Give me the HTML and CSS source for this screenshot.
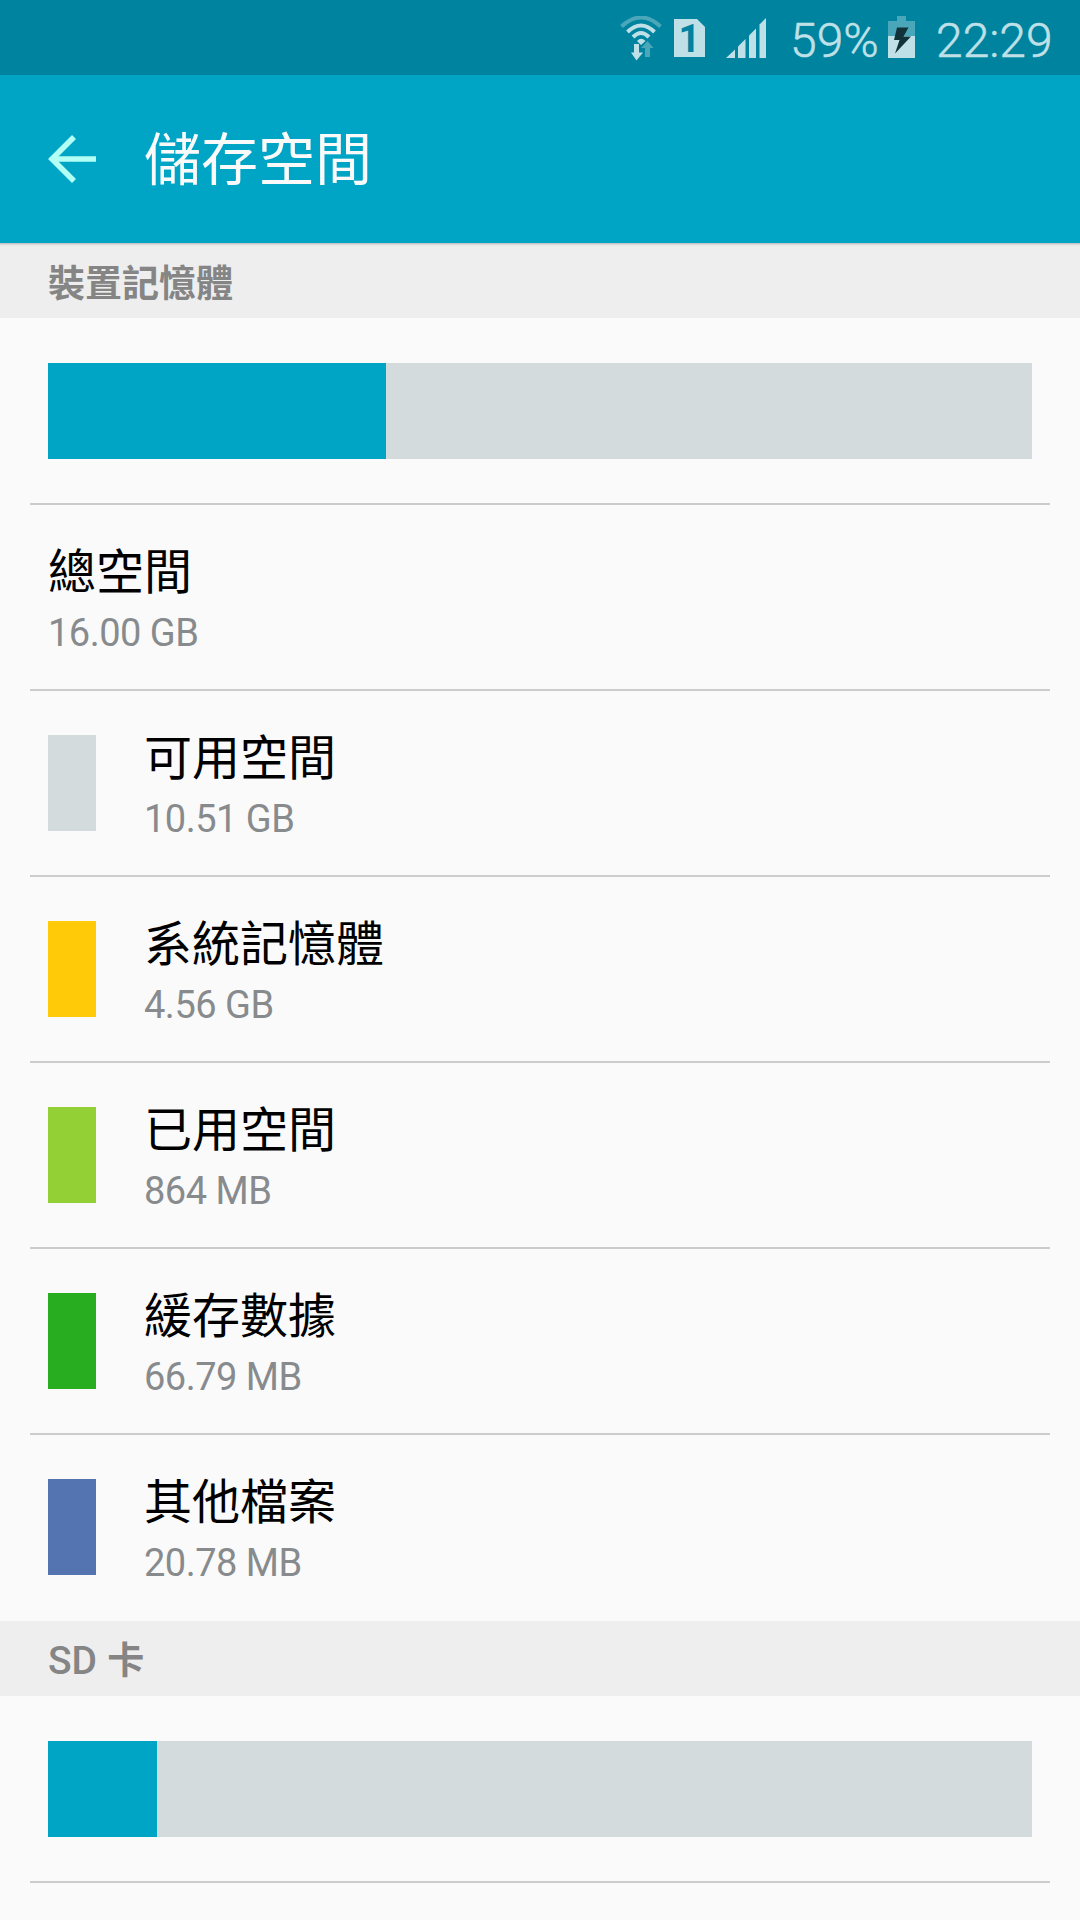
FILE: index.html
```html
<!DOCTYPE html>
<html lang="zh-Hant">
<head>
  <meta charset="UTF-8">
  <meta name="viewport" content="width=device-width, initial-scale=1.0">
  <title>儲存空間</title>
  <link rel="stylesheet" href="styles.css">
</head>
<body>
  <div class="status-bar">
    <svg class="icon-wifi" width="42" height="46" viewBox="0 0 42 46" fill="none">
      <g stroke="#bfe0e7" stroke-width="4">
        <path d="M1.5 10.5 Q21 -7.5 40.5 10.5" stroke="#4aa7ba"/>
        <path d="M7.5 16 Q21 3 34.5 16"/>
        <path d="M13 21 Q21 13 29 21"/>
      </g>
      <path d="M17 25 Q21 20.5 25.5 25 L21 29 Z" fill="#bfe0e7"/>
      <path d="M14 28 h5 v8.5 h4 L16.5 44.5 L11 36.5 h3 Z" fill="#bfe0e7"/>
      <path d="M27.5 25 L33.5 32 h-3.5 v9 h-5 v-9 h-4 Z" fill="#4aa7ba"/>
    </svg>
    <div class="icon-sim">1</div>
    <svg class="icon-signal" width="41" height="40" viewBox="0 0 41 40" fill="#bfe0e7">
      <path d="M0 40 L9 31.5 V40 Z"/>
      <path d="M12 40 V28.5 L19.5 21 V40 Z"/>
      <path d="M23 40 V17.5 L30 10.5 V40 Z"/>
      <path d="M33.5 40 V6.5 L40 0 V40 Z"/>
    </svg>
    <span class="battery-text">59%</span>
    <svg class="icon-battery" width="27" height="42" viewBox="0 0 27 42">
      <path d="M9 0 h9 v5 h9 v15 H0 V5 h9 Z" fill="#4aa7ba"/>
      <path d="M0 20 h27 v22 H0 Z" fill="#bfe0e7"/>
      <path d="M9 11.5 h11.5 L15.5 20.5 h7.5 L7 37.5 L11.5 24 H6 Z" fill="#12323a"/>
    </svg>
    <span class="clock">22:29</span>
  </div>

  <div class="app-bar">
    <svg class="icon-back" width="48" height="48" viewBox="0 0 48 48" fill="none" stroke="#b2fff5" stroke-width="5.6">
      <path d="M26 2 L4 24 L26 46 M4 24 H48"/>
    </svg>
    <h1>儲存空間</h1>
  </div>

  <h2 class="section first">裝置記憶體</h2>
  <div class="usage">
    <div class="usage-bar"><div class="usage-fill" style="width: 338px"></div></div>
  </div>
  <div class="list">
    <div class="row">
      <div class="info">
        <div class="name">總空間</div>
        <div class="size">16.00 GB</div>
      </div>
    </div>
    <div class="row">
      <div class="swatch available"></div>
      <div class="info">
        <div class="name">可用空間</div>
        <div class="size">10.51 GB</div>
      </div>
    </div>
    <div class="row">
      <div class="swatch system"></div>
      <div class="info">
        <div class="name">系統記憶體</div>
        <div class="size">4.56 GB</div>
      </div>
    </div>
    <div class="row">
      <div class="swatch used"></div>
      <div class="info">
        <div class="name">已用空間</div>
        <div class="size">864 MB</div>
      </div>
    </div>
    <div class="row">
      <div class="swatch cached"></div>
      <div class="info">
        <div class="name">緩存數據</div>
        <div class="size">66.79 MB</div>
      </div>
    </div>
    <div class="row">
      <div class="swatch other"></div>
      <div class="info">
        <div class="name">其他檔案</div>
        <div class="size">20.78 MB</div>
      </div>
    </div>
  </div>

  <h2 class="section"><span class="latin">SD</span> 卡</h2>
  <div class="usage">
    <div class="usage-bar"><div class="usage-fill" style="width: 109px"></div></div>
  </div>
  <hr class="divider">
</body>
</html>
```
FILE: styles.css
```css
* {
  box-sizing: border-box;
}
body {
  margin: 0;
  height: 1920px;
  background: #fafafa;
  color: #000;
  font-family: Roboto, "Noto Sans CJK TC", sans-serif;
}
.status-bar {
  display: flex;
  height: 75px;
  padding: 16px 20px 0 620px;
  background: #00839e;
  color: #bfe0e7;
  font-size: 48px;
  font-weight: 300;
  line-height: 50px;
  white-space: nowrap;
}
.status-bar svg {
  flex: none;
}
.icon-sim {
  width: 31px;
  height: 38px;
  margin: 3px 0 0 12px;
  background: #bfe0e7;
  clip-path: polygon(0 0, 23px 0, 100% 8px, 100% 100%, 0 100%);
  color: #00839e;
  font: 700 38px/40px Roboto, sans-serif;
  text-align: center;
}
.icon-signal {
  margin: 2px 0 0 21px;
}
.battery-text {
  width: 98px;
  margin-left: 23px;
  -webkit-text-stroke: 0.5px #bfe0e7;
}
.clock {
  margin-left: 21px;
  -webkit-text-stroke: 0.5px #bfe0e7;
}
.app-bar {
  display: flex;
  align-items: center;
  gap: 48px;
  height: 168px;
  padding: 0 48px;
  background: #00a5c5;
}
.icon-back {
  flex: none;
}
h1 {
  margin: 0;
  padding-top: 4px;
  color: #fafafa;
  font-size: 57px;
  font-weight: 400;
  line-height: 80px;
}
.section {
  height: 75px;
  margin: 0;
  padding: 3px 0 0 48px;
  background: #eee;
  color: #858585;
  font-size: 37px;
  font-weight: 700;
  line-height: 75px;
}
.section.first {
  padding-top: 4px;
  background: linear-gradient(#bdbdbd, #e2e2e2 2px, #eee 3px);
}
.latin {
  margin-right: 1px;
  font-size: 39px;
  font-weight: 500;
}
.usage {
  height: 185px;
  padding: 45px 48px 44px;
}
.usage-bar {
  height: 96px;
  background: #d3dbdd;
}
.usage-fill {
  height: 100%;
  background: #00a5c5;
}
.list {
  padding: 0 30px 2px;
}
.row {
  display: flex;
  gap: 48px;
  height: 186px;
  padding: 43px 18px 0;
  border-top: 2px solid #ccc;
}
.divider {
  margin: 0 30px;
  border: 0;
  border-top: 2px solid #ccc;
}
.swatch {
  flex: none;
  width: 48px;
  height: 96px;
  margin-top: 1px;
}
.available {
  background: #d3dbdd;
}
.system {
  background: #ffcb08;
}
.used {
  background: #92d036;
}
.cached {
  background: #28ad20;
}
.other {
  background: #5373b1;
}
.name {
  padding-top: 1px;
  font-size: 48px;
  line-height: 48px;
}
.size {
  margin-top: 13px;
  color: #888b8d;
  font-size: 38px;
  line-height: 46px;
  letter-spacing: -0.5px;
}
```
